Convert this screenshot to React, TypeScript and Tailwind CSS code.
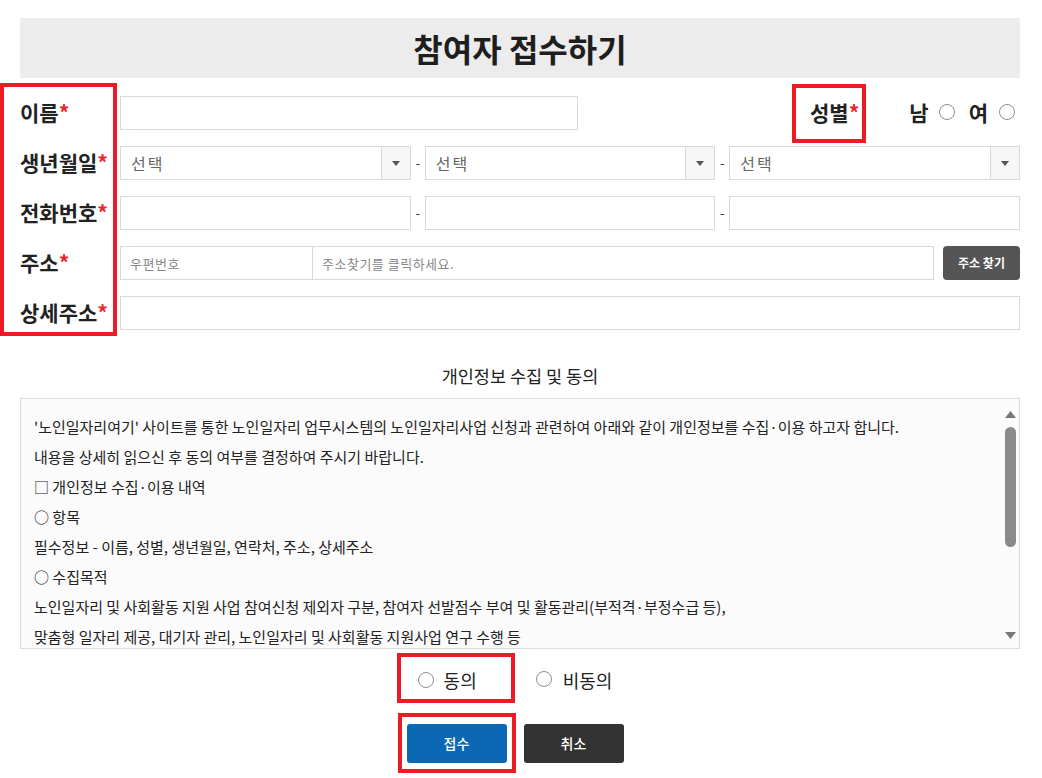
import React from 'react'

const lines = [
  "'노인일자리여기' 사이트를 통한 노인일자리 업무시스템의 노인일자리사업 신청과 관련하여 아래와 같이 개인정보를 수집·이용 하고자 합니다.",
  '내용을 상세히 읽으신 후 동의 여부를 결정하여 주시기 바랍니다.',
  '□ 개인정보 수집·이용 내역',
  '○ 항목',
  '필수정보 - 이름, 성별, 생년월일, 연락처, 주소, 상세주소',
  '○ 수집목적',
  '노인일자리 및 사회활동 지원 사업 참여신청 제외자 구분, 참여자 선발점수 부여 및 활동관리(부적격·부정수급 등),',
  '맞춤형 일자리 제공, 대기자 관리, 노인일자리 및 사회활동 지원사업 연구 수행 등',
]

function Star() {
  return <span className="text-[#e8262b]">*</span>
}

function Label({ children }: { children: React.ReactNode }) {
  return (
    <div className="w-[100px] shrink-0 text-[21px] font-bold text-[#222]">
      {children}
      <Star />
    </div>
  )
}

function Radio() {
  return <span className="inline-block w-[16px] h-[16px] shrink-0 rounded-full border border-[#8f8f8f] bg-white" />
}

function Select() {
  return (
    <div className="flex-1 h-[34px] flex border border-[#d9d9d9] bg-white">
      <span className="flex-1 pl-[10px] flex items-center text-[16px] tracking-[2px] text-[#666]">선택</span>
      <span className="w-[29px] border-l border-[#d9d9d9] bg-[#f6f6f6] flex items-center justify-center">
        <svg width="8" height="5" viewBox="0 0 8 5">
          <path d="M0 0h8L4 5z" fill="#555" />
        </svg>
      </span>
    </div>
  )
}

function Dash() {
  return <span className="w-[14px] shrink-0 text-center text-[13px] text-[#333]">-</span>
}

function TextInput({ className = '', placeholder }: { className?: string; placeholder?: string }) {
  return (
    <input
      placeholder={placeholder}
      className={`h-[34px] border border-[#d9d9d9] bg-white px-[9px] text-[13px] tracking-[0.5px] text-[#333] placeholder:text-[#888] outline-none ${className}`}
    />
  )
}

function RedBox({ className }: { className: string }) {
  return <div className={`absolute border-[4px] border-[#ed1c24] pointer-events-none ${className}`} />
}

export default function App() {
  return (
    <div className="relative w-[1042px] h-[778px] overflow-hidden bg-white font-['Noto_Sans_CJK_KR','Noto_Sans',sans-serif] text-[#222]">
      <div className="ml-[20px] w-[1000px] pt-[18px]">
        <div className="h-[60px] bg-[#ececec] flex items-center justify-center">
          <h1 className="text-[32px] font-bold text-[#1e1e1e]">참여자 접수하기</h1>
        </div>

        <div className="mt-[18px] flex flex-col gap-[16px]">
          <div className="flex items-center h-[34px]">
            <Label>이름</Label>
            <TextInput className="w-[458px]" />
            <div className="ml-auto flex items-center pr-[5px]">
              <span className="text-[21px] font-bold">
                성별
                <Star />
              </span>
              <span className="ml-[50px] text-[21px] font-bold">남</span>
              <span className="ml-[10px]"><Radio /></span>
              <span className="ml-[14px] text-[21px] font-bold">여</span>
              <span className="ml-[11px]"><Radio /></span>
            </div>
          </div>

          <div className="flex items-center h-[34px]">
            <Label>생년월일</Label>
            <div className="flex-1 flex items-center">
              <Select />
              <Dash />
              <Select />
              <Dash />
              <Select />
            </div>
          </div>

          <div className="flex items-center h-[34px]">
            <Label>전화번호</Label>
            <div className="flex-1 flex items-center">
              <TextInput className="flex-1 min-w-0" />
              <Dash />
              <TextInput className="flex-1 min-w-0" />
              <Dash />
              <TextInput className="flex-1 min-w-0" />
            </div>
          </div>

          <div className="flex items-center h-[34px]">
            <Label>주소</Label>
            <div className="flex-1 flex items-center">
              <TextInput className="w-[193px]" placeholder="우편번호" />
              <TextInput className="flex-1 min-w-0 -ml-px" placeholder="주소찾기를 클릭하세요." />
              <button className="ml-[9px] w-[77px] h-[34px] rounded-[4px] bg-[#555] text-white text-[12px] font-bold">
                주소 찾기
              </button>
            </div>
          </div>

          <div className="flex items-center h-[34px]">
            <Label>상세주소</Label>
            <TextInput className="flex-1 min-w-0" />
          </div>
        </div>

        <h2 className="mt-[34px] h-[24px] leading-[24px] text-center text-[17.5px] text-[#222]">개인정보 수집 및 동의</h2>

        <div className="mt-[10px] h-[251px] flex border border-[#dcdcdc] bg-[#fbfbfb]">
          <div className="flex-1 overflow-hidden pl-[13px] pt-[13px] text-[15px] leading-[30px] text-[#222]">
            {lines.map((l, i) => (
              <div key={i} className="whitespace-nowrap">
                {l}
              </div>
            ))}
          </div>
          <div className="w-[18px] shrink-0 flex flex-col items-center pt-[12px] pb-[9px]">
            <svg width="11" height="7" viewBox="0 0 11 7">
              <path d="M5.5 0L11 7H0z" fill="#777" />
            </svg>
            <div className="mt-[9px] w-[11px] h-[120px] rounded-full bg-[#8a8a8a]" />
            <div className="flex-1" />
            <svg width="11" height="7" viewBox="0 0 11 7">
              <path d="M0 0h11L5.5 7z" fill="#777" />
            </svg>
          </div>
        </div>

        <div className="mt-[19px] h-[24px] flex items-center justify-center pr-[10px]">
          <Radio />
          <span className="ml-[10px] text-[18px]">동의</span>
          <span className="ml-[59px]"><Radio /></span>
          <span className="ml-[11px] text-[18px]">비동의</span>
        </div>

        <div className="mt-[32px] flex justify-center gap-[17px] pr-[10px]">
          <button className="w-[100px] h-[39px] rounded-[3px] bg-[#0b68b4] text-white text-[14px] font-medium">접수</button>
          <button className="w-[100px] h-[39px] rounded-[3px] bg-[#333] text-white text-[14px] font-medium">취소</button>
        </div>
      </div>

      <RedBox className="left-0 top-[83px] w-[117px] h-[253px]" />
      <RedBox className="left-[792px] top-[84px] w-[74px] h-[59px]" />
      <RedBox className="left-[397px] top-[653px] w-[118px] h-[50px]" />
      <RedBox className="left-[398px] top-[713px] w-[118px] h-[60px]" />
    </div>
  )
}
